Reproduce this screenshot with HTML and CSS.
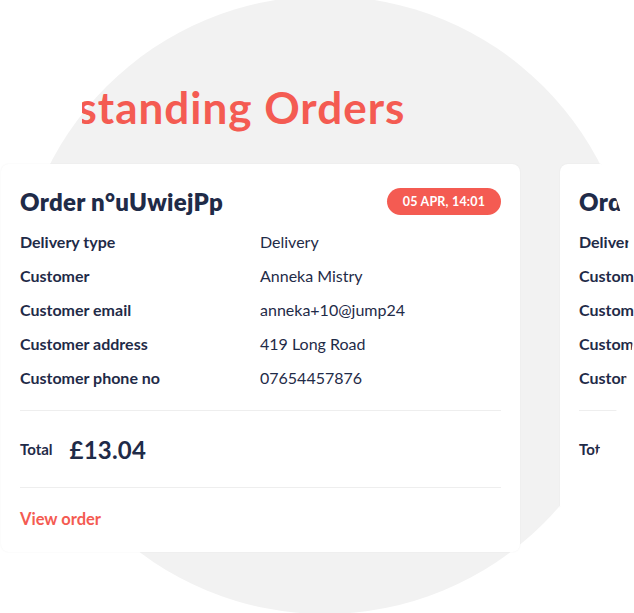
FILE: index.html
```html
<!DOCTYPE html>
<html lang="en">
<head>
<meta charset="utf-8">
<title>Outstanding Orders</title>
<link rel="stylesheet" href="styles.css">
</head>
<body>
<div class="stage">
  <div class="backdrop"></div>
  <header class="title-clip">
    <h1 class="title">Outstanding Orders</h1>
  </header>
  <div class="cards">
    <article class="card">
      <div class="card-head">
        <h2 class="order-no">Order n°uUwiejPp</h2>
        <span class="badge">05 APR, 14:01</span>
      </div>
      <dl class="details">
        <dt>Delivery type</dt><dd>Delivery</dd>
        <dt>Customer</dt><dd>Anneka Mistry</dd>
        <dt>Customer email</dt><dd>anneka+10@jump24</dd>
        <dt>Customer address</dt><dd>419 Long Road</dd>
        <dt>Customer phone no</dt><dd>07654457876</dd>
      </dl>
      <div class="total">
        <span class="total-label">Total</span>
        <span class="total-value">£13.04</span>
      </div>
      <div class="card-foot">
        <a class="view-link" href="#">View order</a>
      </div>
    </article>
    <article class="card card-next">
      <div class="card-head">
        <h2 class="order-no">Order n°kTrwaxQe</h2>
        <span class="badge">05 APR, 14:22</span>
      </div>
      <dl class="details">
        <dt>Delivery type</dt><dd>Delivery</dd>
        <dt>Customer</dt><dd>Anneka Mistry</dd>
        <dt>Customer email</dt><dd>anneka+10@jump24</dd>
        <dt>Customer address</dt><dd>419 Long Road</dd>
        <dt>Customer phone no</dt><dd>07654457876</dd>
      </dl>
      <div class="total">
        <span class="total-label">Total</span>
        <span class="total-value">£9.50</span>
      </div>
      <div class="card-foot">
        <a class="view-link" href="#">View order</a>
      </div>
    </article>
  </div>
</div>
</body>
</html>
```
FILE: styles.css
```css
* { box-sizing: border-box; }
html, body {
  margin: 0;
  padding: 0;
  background: #ffffff;
}
body {
  font-family: Lato, "Noto Sans", "Liberation Sans", sans-serif;
  color: #1f2b48;
}
.stage {
  position: relative;
  width: 634px;
  height: 613px;
  overflow: hidden;
  isolation: isolate;
}
.backdrop {
  position: absolute;
  left: 16px;
  top: -4px;
  width: 618px;
  height: 618px;
  border-radius: 50%;
  background: #f2f2f2;
  z-index: -1;
}
.title-clip {
  margin-left: 82px;
  padding-top: 80px;
  height: 164px;
  overflow: hidden;
}
.title {
  margin: 0 0 0 -84px;
  font-size: 44px;
  line-height: 54px;
  font-weight: 700;
  color: #f45b52;
  white-space: nowrap;
  letter-spacing: 1px;
}
.cards {
  display: flex;
  gap: 40px;
  padding-left: 1px;
}
.card {
  flex: 0 0 519px;
  height: 388px;
  background: #ffffff;
  border-radius: 8px;
  box-shadow: 0 0 2px rgba(0, 0, 0, 0.06);
  padding: 24px 19px 0 19px;
  display: flex;
  flex-direction: column;
}
.card-next {
  clip-path: circle(310px at -235px 141px);
}
.card-head {
  display: flex;
  align-items: center;
  justify-content: space-between;
  height: 27px;
}
.order-no {
  margin: 0;
  font-size: 24px;
  font-weight: 800;
  line-height: 27px;
  letter-spacing: 0.3px;
  color: #1f2b48;
}
.badge {
  display: inline-flex;
  align-items: center;
  justify-content: center;
  width: 114px;
  height: 27px;
  border-radius: 14px;
  background: #f45b52;
  color: #ffffff;
  font-size: 12.5px;
  font-weight: 700;
  letter-spacing: 0.2px;
}
.details {
  margin: 9px 0 0 0;
  display: grid;
  grid-template-columns: 240px 1fr;
  grid-auto-rows: 34px;
  align-items: center;
  padding-bottom: 16px;
  border-bottom: 1px solid #eeeeee;
}
.details dt {
  font-size: 16px;
  font-weight: 700;
}
.details dd {
  margin: 0;
  font-size: 16px;
  font-weight: 400;
}
.total {
  height: 77px;
  display: flex;
  align-items: center;
  gap: 17px;
  border-bottom: 1px solid #eeeeee;
}
.total-label {
  font-size: 15px;
  font-weight: 700;
}
.total-value {
  font-size: 24px;
  font-weight: 700;
  letter-spacing: 0.2px;
}
.card-foot {
  flex: 1;
  display: flex;
  align-items: center;
  padding-bottom: 3px;
}
.view-link {
  font-size: 16.5px;
  font-weight: 700;
  color: #f45b52;
  text-decoration: none;
}
```
